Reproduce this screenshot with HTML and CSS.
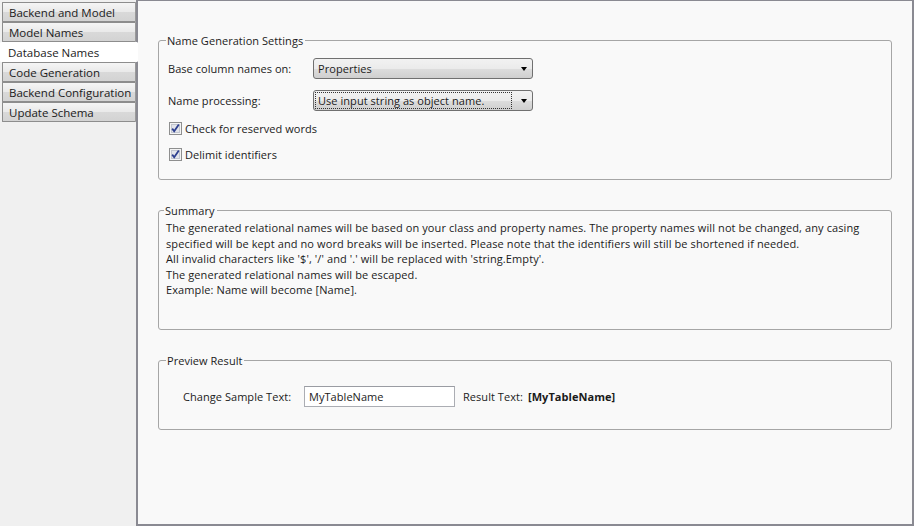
FILE: index.html
```html
<!DOCTYPE html>
<html>
<head>
<meta charset="utf-8">
<link rel="stylesheet" href="styles.css">
</head>
<body>
<div class="app">
  <nav class="tabs">
    <div class="tab">Backend and Model</div>
    <div class="tab">Model Names</div>
    <div class="tab selected">Database Names</div>
    <div class="tab">Code Generation</div>
    <div class="tab">Backend Configuration</div>
    <div class="tab">Update Schema</div>
  </nav>
  <main class="panel">
    <fieldset class="group group-settings">
      <legend>Name Generation Settings</legend>
      <div class="row">
        <span class="label">Base column names on:</span>
        <div class="combo"><span class="combo-text">Properties</span><span class="arrow"></span></div>
      </div>
      <div class="row">
        <span class="label">Name processing:</span>
        <div class="combo"><span class="combo-text focus">Use input string as object name.</span><span class="arrow"></span></div>
      </div>
      <label class="check">
        <svg class="cb" width="13" height="13" viewBox="0 0 13 13"><rect x="0.5" y="0.5" width="12" height="12" fill="#f4f4f4" stroke="#8e8f8f"/><rect x="2.5" y="2.5" width="8" height="8" fill="#e2e4ea" stroke="#c2c6d0"/><path d="M3.2 6.6 L5.2 9.2 L9.8 2.6" fill="none" stroke="#2d3f8f" stroke-width="1.8"/></svg>
        <span>Check for reserved words</span>
      </label>
      <label class="check">
        <svg class="cb" width="13" height="13" viewBox="0 0 13 13"><rect x="0.5" y="0.5" width="12" height="12" fill="#f4f4f4" stroke="#8e8f8f"/><rect x="2.5" y="2.5" width="8" height="8" fill="#e2e4ea" stroke="#c2c6d0"/><path d="M3.2 6.6 L5.2 9.2 L9.8 2.6" fill="none" stroke="#2d3f8f" stroke-width="1.8"/></svg>
        <span>Delimit identifiers</span>
      </label>
    </fieldset>

    <fieldset class="group group-summary">
      <legend>Summary</legend>
      <p class="summary">The generated relational names will be based on your class and property names. The property names will not be changed, any casing specified will be kept and no word breaks will be inserted. Please note that the identifiers will still be shortened if needed.<br>All invalid characters like '$', '/' and '.' will be replaced with 'string.Empty'.<br>The generated relational names will be escaped.<br>Example: Name will become [Name].</p>
    </fieldset>

    <fieldset class="group group-preview">
      <legend>Preview Result</legend>
      <div class="preview-row">
        <span class="plabel">Change Sample Text:</span>
        <div class="textbox">MyTableName</div>
        <span class="rlabel">Result Text:</span>
        <b class="result">[MyTableName]</b>
      </div>
    </fieldset>
  </main>
</div>
</body>
</html>
```

FILE: styles.css
```css
html, body {
  margin: 0;
  padding: 0;
  width: 914px;
  height: 526px;
  overflow: hidden;
}
body {
  font-family: "Open Sans", "Noto Sans", sans-serif;
  font-size: 11px;
  letter-spacing: 0.05px;
  color: #1b1b1b;
  background: #f0f0f0;
}
.app {
  display: flex;
  height: 526px;
}
.tabs {
  width: 136px;
  flex: none;
  padding-top: 2px;
  background: #f0f0f0;
  display: flex;
  flex-direction: column;
}
.tab {
  box-sizing: border-box;
  height: 20px;
  margin-left: 2px;
  border: 1px solid #8d8d8d;
  border-right-color: #9a9a9a;
  border-radius: 1px;
  background: linear-gradient(#f5f5f5, #e9e9e9 50%, #d9d9d9 51%, #d3d3d3);
  padding-left: 6px;
  line-height: 19px;
  white-space: nowrap;
  font-size: 11.5px;
  letter-spacing: 0;
}
.tab.selected {
  margin-left: 0;
  margin-right: -2px;
  background: #ffffff;
  border-color: #ffffff;
  padding-left: 7px;
  position: relative;
  z-index: 1;
}
.panel {
  flex: 1;
  box-sizing: border-box;
  height: 526px;
  background: #f9f9f9;
  border: 1px solid #8a8a92;
  border-left-width: 2px;
  border-bottom-width: 2px;
  border-right-width: 2px;
  padding: 32px 20px 0 20px;
  display: flex;
  flex-direction: column;
  gap: 23px;
}
.group {
  margin: 0;
  border: 1px solid #a6a6a6;
  border-radius: 3px;
  padding: 0 8px 0 9px;
}
.group legend {
  padding: 0 2px 0 1px;
  margin-left: -2px;
  line-height: 15px;
}
.group-settings {
  height: 147px;
  box-sizing: border-box;
  padding-top: 10px;
}
.row {
  display: flex;
  align-items: center;
  height: 21px;
  margin-bottom: 11px;
}
.label {
  width: 145px;
  flex: none;
}
.combo {
  box-sizing: border-box;
  width: 220px;
  height: 21px;
  border: 1px solid #707070;
  border-radius: 3px;
  background: linear-gradient(#f2f2f2, #ebebeb 50%, #dddddd 51%, #cfcfcf);
  display: flex;
  align-items: center;
  padding: 0 0 0 3px;
}
.combo-text {
  flex: 1;
  line-height: 15px;
  padding: 0 1px;
}
.combo-text.focus {
  flex: none;
  width: 192px;
  border: 1px dotted #333;
  margin-left: -2px;
  padding-left: 2px;
}
.arrow {
  width: 0;
  height: 0;
  border-left: 3.5px solid transparent;
  border-right: 3.5px solid transparent;
  border-top: 4px solid #000;
  margin: 0 5px 0 auto;
}
.check {
  display: flex;
  align-items: center;
  gap: 3px;
  margin-left: 1px;
  height: 13px;
  margin-bottom: 13px;
}
.check:first-of-type {
  margin-top: 2px;
}
.cb {
  display: block;
  flex: none;
}
.group-summary {
  height: 127px;
  box-sizing: border-box;
  padding: 0 8px 0 7px;
}
.summary {
  margin: 2px 0 0 0;
  line-height: 15.5px;
  letter-spacing: 0.1px;
}
.group-preview {
  height: 77px;
  box-sizing: border-box;
  padding: 18px 8px 0 9px;
}
.preview-row {
  display: flex;
  align-items: center;
  height: 21px;
  padding-left: 15px;
}
.plabel {
  width: 121px;
  flex: none;
}
.textbox {
  box-sizing: border-box;
  width: 151px;
  height: 21px;
  border: 1px solid #abadb3;
  border-top-color: #9a9ca3;
  background: #ffffff;
  padding-left: 4px;
  line-height: 19px;
  margin-right: 8px;
}
.rlabel {
  width: 65px;
  flex: none;
}
.result {
  font-weight: bold;
}
```
